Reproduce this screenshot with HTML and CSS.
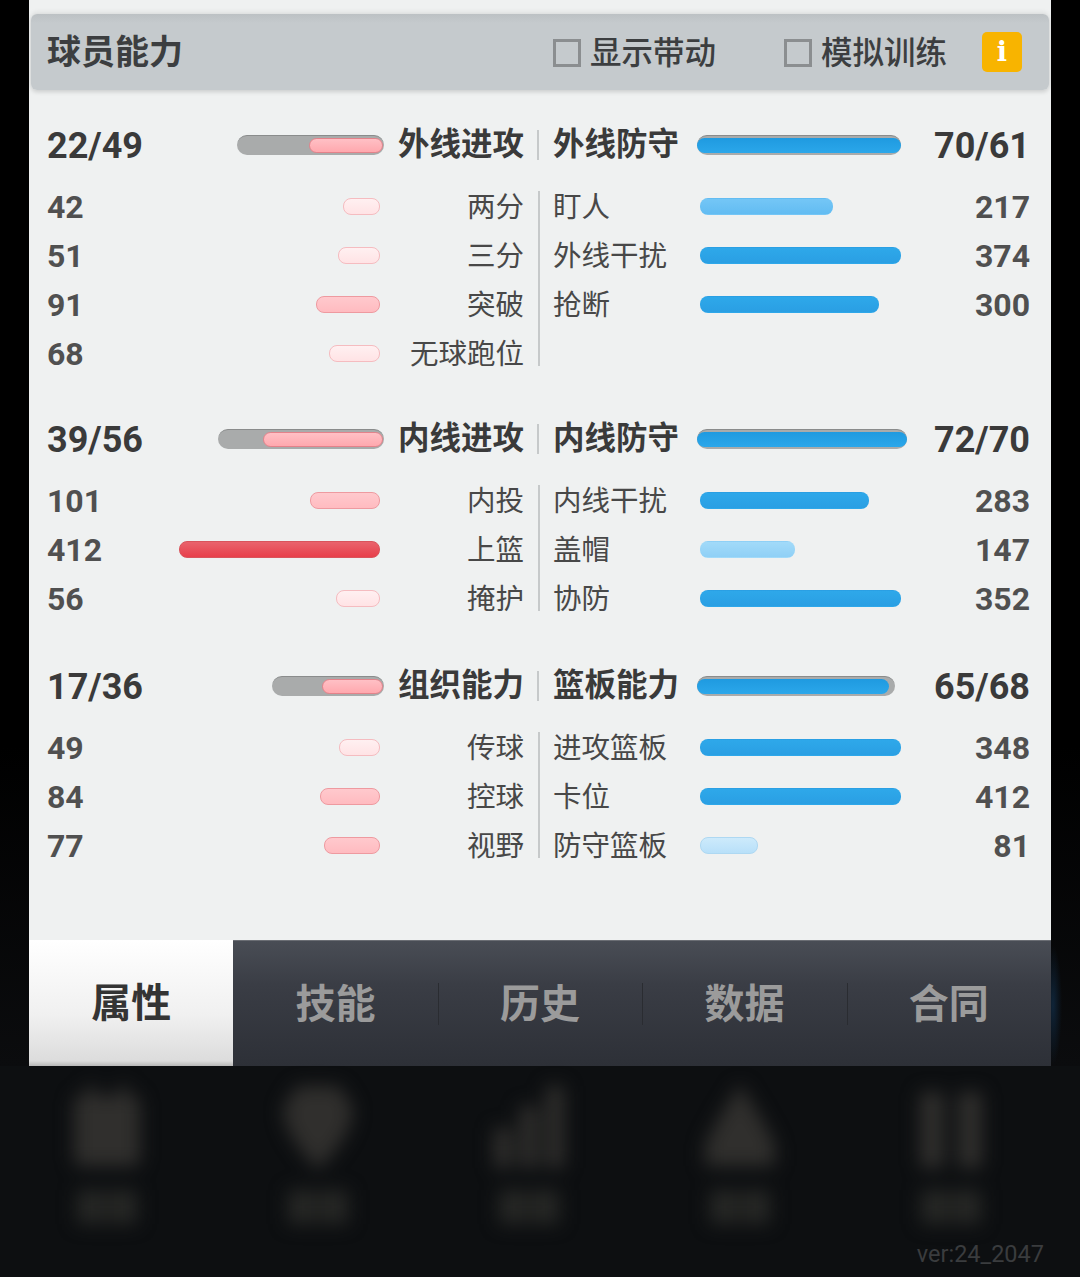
FILE: index.html
```html
<!DOCTYPE html>
<html>
<head>
  <meta charset="utf-8" />
  <title>球员能力</title>
  <link rel="stylesheet" href="styles.css">
</head>
<body>
  <div class="top">
    <div class="panel">
      <div class="titlebar">
        <h1 class="title">球员能力</h1>
        <label class="check check-first"><span class="box"></span>显示带动</label>
        <label class="check check-second"><span class="box"></span>模拟训练</label>
        <span class="info">i</span>
      </div>

      <div class="groups">
        <section class="group">
          <div class="head">
            <div class="head-side">
              <span class="head-num">22/49</span>
              <span class="track" style="width:147px"><i class="fill-red" style="width:74px"></i></span>
              <span class="head-label head-label-l">外线进攻</span>
            </div>
            <div class="divider divider-head"></div>
            <div class="head-side">
              <span class="head-label head-label-r">外线防守</span>
              <span class="track" style="width:204px"><i class="fill-blue" style="width:204px"></i></span>
              <span class="head-num num-r">70/61</span>
            </div>
          </div>
          <div class="rows">
            <div class="col">
              <div class="row"><span class="num">42</span><span class="bar-l"><i class="bar red-1" style="width:37px"></i></span><span class="label-l">两分</span></div>
              <div class="row"><span class="num">51</span><span class="bar-l"><i class="bar red-1" style="width:42px"></i></span><span class="label-l">三分</span></div>
              <div class="row"><span class="num">91</span><span class="bar-l"><i class="bar red-2" style="width:64px"></i></span><span class="label-l">突破</span></div>
              <div class="row"><span class="num">68</span><span class="bar-l"><i class="bar red-1" style="width:51px"></i></span><span class="label-l">无球跑位</span></div>
            </div>
            <div class="divider"></div>
            <div class="col">
              <div class="row"><span class="label-r">盯人</span><span class="bar-r"><i class="bar blue-2" style="width:133px"></i></span><span class="num num-r">217</span></div>
              <div class="row"><span class="label-r">外线干扰</span><span class="bar-r"><i class="bar blue-1" style="width:201px"></i></span><span class="num num-r">374</span></div>
              <div class="row"><span class="label-r">抢断</span><span class="bar-r"><i class="bar blue-1" style="width:179px"></i></span><span class="num num-r">300</span></div>
            </div>
          </div>
        </section>

        <section class="group group-mid">
          <div class="head">
            <div class="head-side">
              <span class="head-num">39/56</span>
              <span class="track" style="width:166px"><i class="fill-red" style="width:120px"></i></span>
              <span class="head-label head-label-l">内线进攻</span>
            </div>
            <div class="divider divider-head"></div>
            <div class="head-side">
              <span class="head-label head-label-r">内线防守</span>
              <span class="track" style="width:210px"><i class="fill-blue" style="width:210px"></i></span>
              <span class="head-num num-r">72/70</span>
            </div>
          </div>
          <div class="rows">
            <div class="col">
              <div class="row"><span class="num">101</span><span class="bar-l"><i class="bar red-2" style="width:70px"></i></span><span class="label-l">内投</span></div>
              <div class="row"><span class="num">412</span><span class="bar-l"><i class="bar red-3" style="width:201px"></i></span><span class="label-l">上篮</span></div>
              <div class="row"><span class="num">56</span><span class="bar-l"><i class="bar red-1" style="width:44px"></i></span><span class="label-l">掩护</span></div>
            </div>
            <div class="divider"></div>
            <div class="col">
              <div class="row"><span class="label-r">内线干扰</span><span class="bar-r"><i class="bar blue-1" style="width:169px"></i></span><span class="num num-r">283</span></div>
              <div class="row"><span class="label-r">盖帽</span><span class="bar-r"><i class="bar blue-3" style="width:95px"></i></span><span class="num num-r">147</span></div>
              <div class="row"><span class="label-r">协防</span><span class="bar-r"><i class="bar blue-1" style="width:201px"></i></span><span class="num num-r">352</span></div>
            </div>
          </div>
        </section>

        <section class="group group-last">
          <div class="head">
            <div class="head-side">
              <span class="head-num">17/36</span>
              <span class="track" style="width:112px"><i class="fill-red" style="width:61px"></i></span>
              <span class="head-label head-label-l">组织能力</span>
            </div>
            <div class="divider divider-head"></div>
            <div class="head-side">
              <span class="head-label head-label-r">篮板能力</span>
              <span class="track" style="width:198px"><i class="fill-blue" style="width:192px"></i></span>
              <span class="head-num num-r">65/68</span>
            </div>
          </div>
          <div class="rows">
            <div class="col">
              <div class="row"><span class="num">49</span><span class="bar-l"><i class="bar red-1" style="width:41px"></i></span><span class="label-l">传球</span></div>
              <div class="row"><span class="num">84</span><span class="bar-l"><i class="bar red-2" style="width:60px"></i></span><span class="label-l">控球</span></div>
              <div class="row"><span class="num">77</span><span class="bar-l"><i class="bar red-2" style="width:56px"></i></span><span class="label-l">视野</span></div>
            </div>
            <div class="divider"></div>
            <div class="col">
              <div class="row"><span class="label-r">进攻篮板</span><span class="bar-r"><i class="bar blue-1" style="width:201px"></i></span><span class="num num-r">348</span></div>
              <div class="row"><span class="label-r">卡位</span><span class="bar-r"><i class="bar blue-1" style="width:201px"></i></span><span class="num num-r">412</span></div>
              <div class="row"><span class="label-r">防守篮板</span><span class="bar-r"><i class="bar blue-4" style="width:58px"></i></span><span class="num num-r">81</span></div>
            </div>
          </div>
        </section>
      </div>

      <div class="tabs">
        <div class="tab tab-active">属性</div>
        <div class="tab">技能</div>
        <div class="tab tab-sep">历史</div>
        <div class="tab tab-sep">数据</div>
        <div class="tab tab-sep">合同</div>
      </div>
    </div>
  </div>

  <div class="bottom">
    <div class="blurred">
      <div class="blur-item">
        <svg class="blur-icon" viewBox="0 0 70 90"><rect x="2" y="12" width="66" height="70" rx="6" /><rect x="14" y="2" width="10" height="14" /><rect x="46" y="2" width="10" height="14" /></svg>
        <div class="blur-text"></div>
      </div>
      <div class="blur-item">
        <svg class="blur-icon" viewBox="0 0 70 90"><path d="M0 24 14 2H56L70 24C70 48 48 72 35 86 22 72 0 48 0 24Z" /></svg>
        <div class="blur-text"></div>
      </div>
      <div class="blur-item">
        <svg class="blur-icon" viewBox="0 0 70 90"><rect x="0" y="44" width="18" height="40" /><rect x="26" y="22" width="18" height="62" /><rect x="52" y="2" width="18" height="82" /></svg>
        <div class="blur-text"></div>
      </div>
      <div class="blur-item">
        <svg class="blur-icon" viewBox="0 0 70 90"><path d="M35 0 56 34 70 60V82H0V60L14 34Z" /></svg>
        <div class="blur-text"></div>
      </div>
      <div class="blur-item">
        <svg class="blur-icon" viewBox="0 0 70 90"><rect x="4" y="8" width="24" height="76" rx="4" /><rect x="42" y="8" width="24" height="76" rx="4" /></svg>
        <div class="blur-text"></div>
      </div>
    </div>
    <div class="version">ver:24_2047</div>
  </div>
</body>
</html>
```

FILE: styles.css
```css
* {
  box-sizing: border-box;
}

html, body {
  margin: 0;
  height: 1277px;
  overflow: hidden;
}

body {
  background-color: #0d0f11;
  font-family: "Noto Sans CJK SC", "Noto Sans", sans-serif;
  color: #3a3a3a;
}

.top {
  height: 1066px;
  padding: 0 29px;
  background:
    radial-gradient(ellipse 9px 60px at 1053px 1005px, #0f2438, transparent),
    linear-gradient(to bottom, #000 70%, #0b0c0e);
}

.panel {
  height: 1066px;
  display: flex;
  flex-direction: column;
  background-color: #eff1f1;
}

.titlebar {
  height: 76px;
  margin: 14px 2px 0;
  display: flex;
  align-items: center;
  padding-left: 16px;
  background: linear-gradient(to bottom, #bcc1c4, #c5cacd 12%);
  border-radius: 6px;
  box-shadow: 0 2px 4px rgba(0, 0, 0, 0.15), 0 -3px 4px rgba(0, 0, 0, 0.05);
}

.title {
  margin: 0;
  padding-bottom: 4px;
  font-size: 34px;
  line-height: 1;
  font-weight: 700;
  color: #3c3e40;
  width: 506px;
}

.check {
  display: flex;
  align-items: center;
  font-size: 31.5px;
  font-weight: 500;
  color: #3c3e40;
  padding-bottom: 4px;
}

.check-first {
  width: 231px;
}

.check-second {
  width: 198px;
}

.box {
  width: 28px;
  height: 28px;
  margin: 6px 9px 0 0;
  border: 3px solid #8b8e90;
}

.info {
  width: 40px;
  height: 40px;
  border-radius: 5px;
  background-color: #f8b400;
  color: #fff;
  font-family: "DejaVu Serif", serif;
  font-size: 27px;
  font-weight: 700;
  line-height: 40px;
  text-align: center;
}

.groups {
  flex: 1;
  padding: 30px 21px 0 18px;
}

.group {
  margin-bottom: 35px;
}

.group-mid {
  margin-top: 36px;
  margin-bottom: 38px;
}

.head, .rows {
  display: flex;
}

.head {
  height: 50px;
  margin-bottom: 12px;
}

.col, .head-side {
  width: 477px;
}

.head-side {
  display: flex;
  align-items: center;
}

.divider {
  width: 2px;
  margin: 9px 13px 12px 14px;
  background-color: #c6c9ca;
  flex: none;
}

.divider-head {
  margin: 10px 14px 10px 13px;
}

.head-num {
  flex: 1;
  padding-top: 2px;
  font-family: Roboto, sans-serif;
  font-size: 36px;
  font-weight: 700;
  color: #3a3a3a;
}

.head-side .head-num.num-r {
  text-align: right;
}

.head-label {
  padding-bottom: 6px;
  font-size: 31.5px;
  font-weight: 700;
  line-height: 1;
  color: #3a3a3a;
  flex: none;
}

.head-label-l {
  width: 140px;
  text-align: right;
}

.head-label-r {
  width: 144px;
}

.track {
  height: 20px;
  padding: 2px 1px 2px 2px;
  display: flex;
  justify-content: flex-end;
  background-color: #a9abab;
  border-top: 1px solid #8a8c8c;
  border-radius: 10px;
  flex: none;
}

.head-side:last-child .track {
  justify-content: flex-start;
  padding: 2px 0;
}

.fill-red {
  height: 100%;
  background: linear-gradient(to bottom, #ffc0c5, #ffa8ae);
  border: 1px solid #e4828a;
  border-radius: 8px;
}

.fill-blue {
  height: 100%;
  background: linear-gradient(to bottom, #1f9ae0, #2ba7ea);
  border-radius: 8px;
}

.row {
  height: 49px;
  display: flex;
  align-items: center;
}

.num {
  width: 120px;
  flex: none;
  font-family: Roboto, sans-serif;
  font-size: 32px;
  font-weight: 700;
  color: #505050;
}

.row .num-r {
  flex: 1;
  width: auto;
  text-align: right;
}

.bar-l {
  flex: 1;
  display: flex;
  justify-content: flex-end;
}

.bar-r {
  width: 201px;
  flex: none;
  display: flex;
}

.label-l, .label-r {
  padding-bottom: 2px;
  font-size: 28.5px;
  line-height: 1;
  color: #484848;
  flex: none;
}

.label-l {
  width: 144px;
  text-align: right;
}

.label-r {
  width: 147px;
}

.bar {
  height: 17px;
  border-radius: 8px;
  border: 1px solid transparent;
}

.red-1 {
  background: linear-gradient(to bottom, #fff0f1, #ffe3e5);
  border-color: #f5bcc0;
}

.red-2 {
  background: linear-gradient(to bottom, #ffc9cd, #ffbbc0);
  border-color: #ee9aa0;
}

.red-3 {
  background: linear-gradient(to bottom, #e9636c, #e83f4b);
  border-color: #d9545c;
}

.blue-1 {
  background: linear-gradient(to bottom, #2ea8ea, #2a9fe3);
}

.blue-2 {
  background: linear-gradient(to bottom, #74c6f6, #62bcf2);
}

.blue-3 {
  background: linear-gradient(to bottom, #a2daf9, #8fd0f6);
}

.blue-4 {
  background: linear-gradient(to bottom, #cdeafb, #b8e0f9);
  border-color: #aed8f2;
}

.tabs {
  height: 126px;
  display: flex;
  background: linear-gradient(to bottom, #494d55, #3a3d45 35%, #2d3037);
  border-top: 1px solid #6b6e74;
}

.tab {
  width: 204.6px;
  padding-bottom: 6px;
  display: flex;
  align-items: center;
  justify-content: center;
  font-size: 40px;
  font-weight: 700;
  color: #9b9b9b;
  position: relative;
}

.tab-sep::before {
  content: "";
  position: absolute;
  left: 0;
  top: 42px;
  height: 42px;
  width: 1px;
  background-color: #2a2c31;
}

.tab-active {
  background: linear-gradient(to bottom, #ffffff, #f0f0f0 60%, #dcdcdc 96%, #b8b8b8);
  color: #343434;
  margin-top: -1px;
}

.bottom {
  height: 211px;
  position: relative;
  background-color: #0d0f11;
}

.blurred {
  display: flex;
  padding: 18px 0 0 52px;
  gap: 101px;
  filter: blur(9px);
}

.blur-item {
  width: 110px;
  display: flex;
  flex-direction: column;
  align-items: center;
  gap: 16px;
}

.blur-icon {
  width: 70px;
  height: 90px;
  fill: #302f2d;
}

.blur-text {
  width: 60px;
  height: 34px;
  background: linear-gradient(to right, #262725 45%, #0d0f11 50%, #262725 55%);
}

.version {
  position: absolute;
  right: 36px;
  bottom: 9px;
  font-family: Roboto, sans-serif;
  font-size: 23.5px;
  color: #3a3c3e;
}
```
